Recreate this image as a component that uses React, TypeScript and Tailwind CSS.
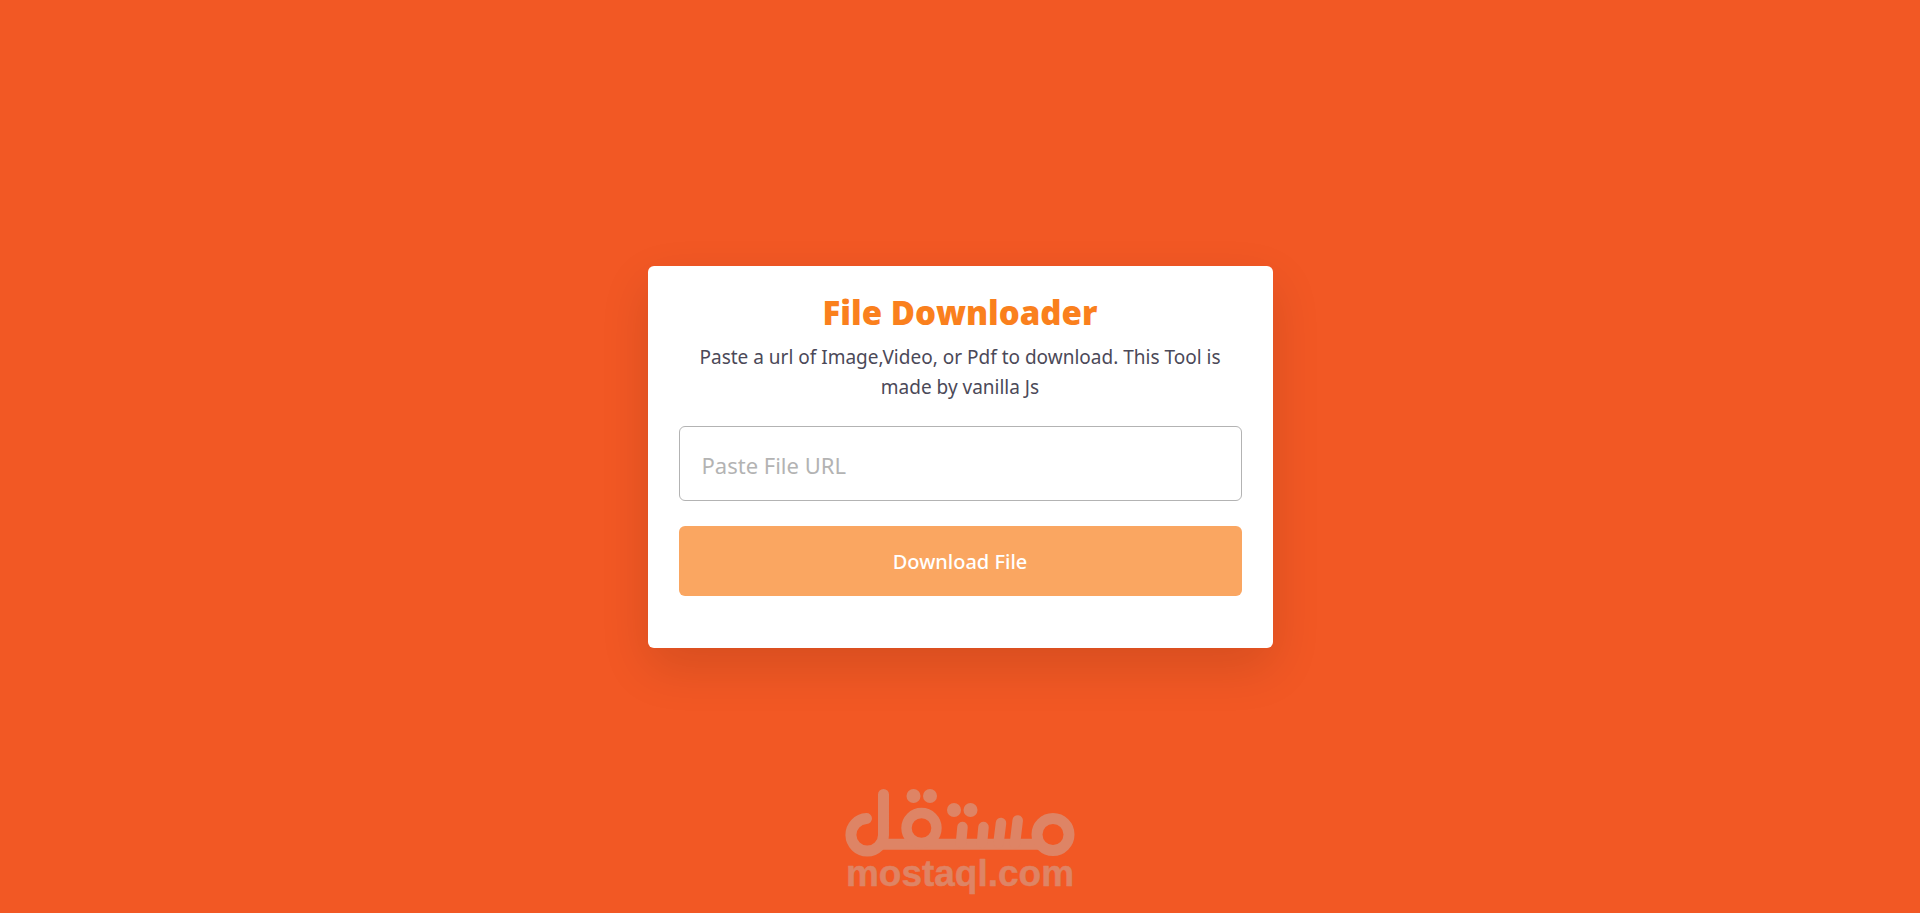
import React, { useState } from 'react';

const Watermark: React.FC = () => (
  <svg
    viewBox="0 0 260 135"
    className="pointer-events-none absolute bottom-0 left-1/2 h-[138px] w-[260px] -translate-x-1/2"
    preserveAspectRatio="xMidYMin meet"
    role="img"
    aria-label="mostaql.com"
  >
    <g fill="none" stroke="#de8465" strokeWidth="11" strokeLinecap="round" strokeLinejoin="round">
      <path d="M36.5 43.5A16.3 16.3 0 1 0 53.5 60V19.5" />
      <path d="M50 69.3H212" strokeLinecap="butt" />
      <circle cx="91.5" cy="53" r="15" strokeWidth="10.4" />
      <circle cx="223" cy="59.5" r="16" />
      <path d="M132.5 52L131 68" strokeWidth="10.5" />
      <path d="M153.5 52L152 68" strokeWidth="10.5" />
      <path d="M171 48L168.5 68" strokeWidth="10.5" />
      <path d="M187.7 45.5L185 68" strokeWidth="10.5" />
    </g>
    <g fill="#de8465">
      <circle cx="83.5" cy="21" r="7" />
      <circle cx="100" cy="21" r="7" />
      <circle cx="124" cy="35" r="7" />
      <circle cx="140.5" cy="35" r="7" />
      <text
        x="130"
        y="111"
        textAnchor="middle"
        fontSize="37"
        stroke="#de8465"
        strokeWidth="0.5"
        strokeLinejoin="round"
        className="font-['Liberation_Sans',sans-serif] font-bold"
      >
        mostaql.com
      </text>
    </g>
  </svg>
);

const App: React.FC = () => {
  const [url, setUrl] = useState('');

  return (
    <main className="relative flex min-h-screen items-center justify-center bg-[#f25824] font-['Noto_Sans',sans-serif]">
      <div className="w-[625px] max-w-full rounded-md bg-white px-[31px] pt-[25px] pb-[52px] text-center shadow-[0_19px_50px_rgba(0,0,0,0.12)]">
        <h1 className="font-['Open_Sans',sans-serif] text-[33px] leading-[44px] font-extrabold text-[#fa801d]">
          File Downloader
        </h1>
        <p className="mt-[7px] px-4 text-[19px] leading-[30px] text-[#4b4958]">
          Paste a url of Image,Video, or Pdf to download. This Tool is made by vanilla Js
        </p>
        <form className="mt-6" onSubmit={(e) => e.preventDefault()}>
          <input
            type="url"
            aria-label="File URL"
            placeholder="Paste File URL"
            required
            value={url}
            onChange={(e) => setUrl(e.target.value)}
            className="block h-[75px] w-full rounded-md border border-[#b3b3b3] px-[22px] pt-1 text-[22px] outline-none placeholder:text-[#b3b3b3]"
          />
          <button
            type="submit"
            className="mt-[25px] block h-[70px] w-full rounded-md bg-[#faa661] pt-[2px] text-[20px] font-medium text-white"
          >
            Download File
          </button>
        </form>
      </div>
      <Watermark />
    </main>
  );
};

export default App;
